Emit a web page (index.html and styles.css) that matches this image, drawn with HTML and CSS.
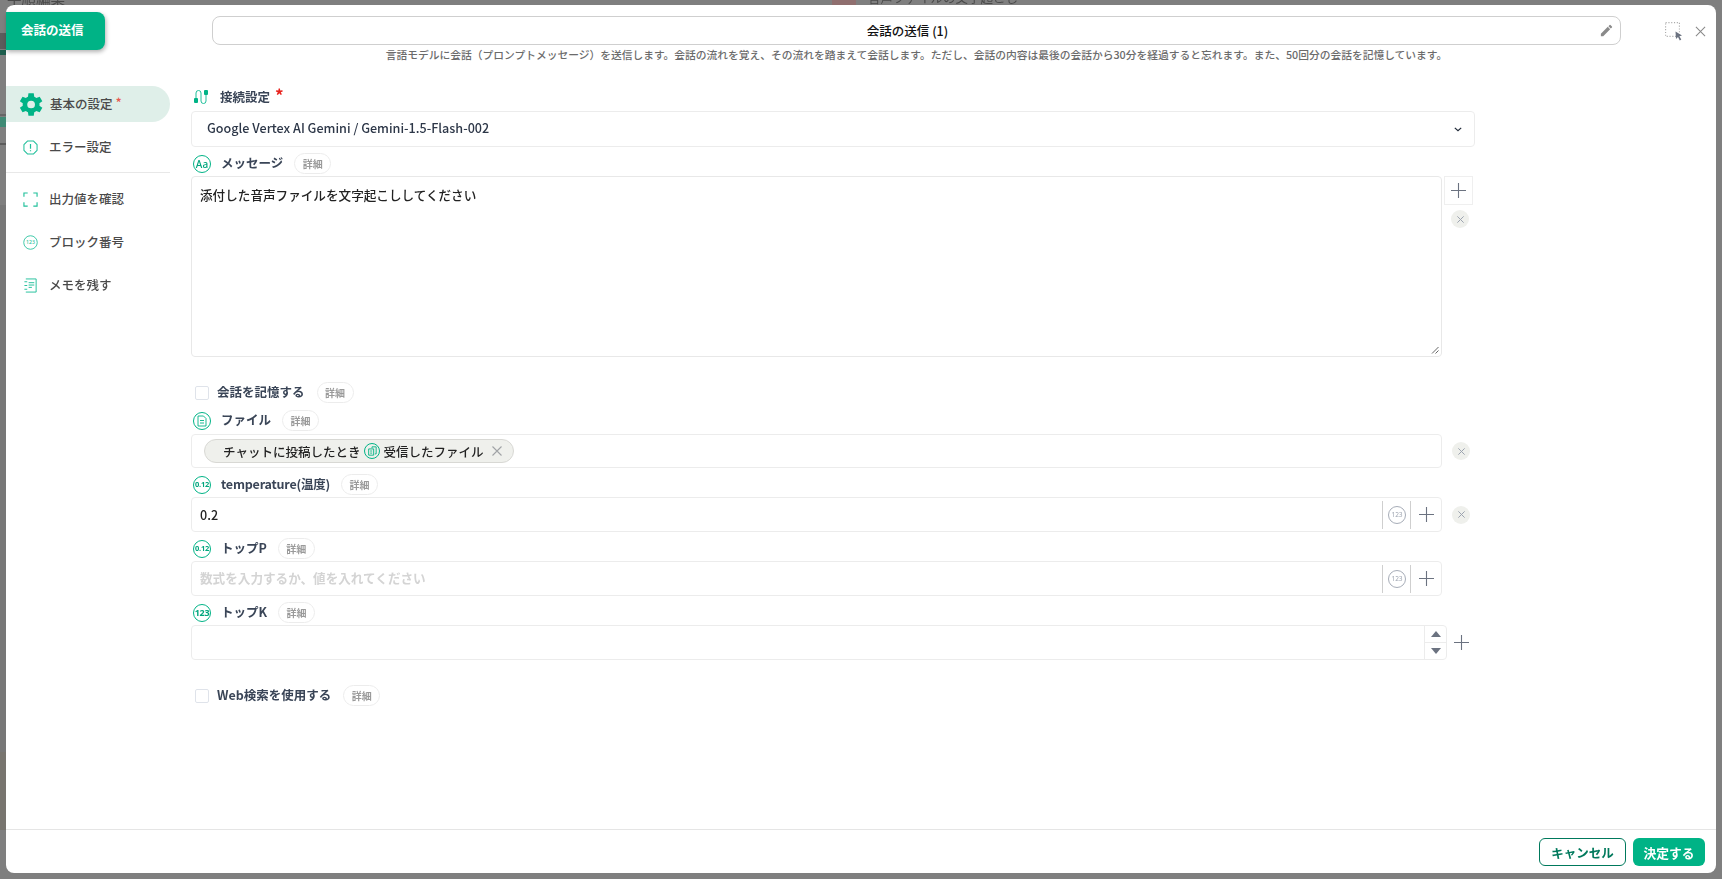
FILE: index.html
```html
<!DOCTYPE html>
<html lang="ja">
<head>
<meta charset="utf-8">
<title>会話の送信</title>
<link rel="stylesheet" href="styles.css">
</head>
<body>
<div class="backdrop">
  <span class="bg-text bg-a">手順編集</span>
  <span class="bg-mark"></span>
  <span class="bg-text bg-b">音声ファイルの文字起こし</span>
  <span class="strip s1"></span>
  <span class="strip s2"></span>
  <span class="strip s3"></span>
  <span class="strip s4"></span>
  <span class="strip s5"></span>
  <span class="strip s6"></span>
  <span class="strip s7"></span>
</div>
<div class="modal">
  <header class="head">
    <div class="tab">会話の送信</div>
    <div class="head-center">
      <div class="title">
        <span class="title-text">会話の送信 (1)</span>
        <svg class="pencil" viewBox="0 0 24 24"><path d="M3 17.25V21h3.75L17.81 9.94l-3.75-3.75L3 17.25zM20.71 7.04a1 1 0 0 0 0-1.41l-2.34-2.34a1 1 0 0 0-1.41 0l-1.83 1.83 3.75 3.75 1.83-1.83z"/></svg>
      </div>
      <p class="desc">言語モデルに会話（プロンプトメッセージ）を送信します。会話の流れを覚え、その流れを踏まえて会話します。ただし、会話の内容は最後の会話から30分を経過すると忘れます。また、50回分の会話を記憶しています。</p>
    </div>
    <div class="head-tools">
      <svg class="select-ico" viewBox="0 0 18 19"><rect x=".6" y=".6" width="13.8" height="13.8" fill="none" stroke="#aaa" stroke-width="1.1" stroke-dasharray="1.1 1.7"/><path d="M10.5 9.5l6.5 4-2.6.8 1.9 3.2-1.5.9-1.8-3.3-2 1.9z" fill="#6b7280"/></svg>
      <svg class="close-ico" viewBox="0 0 12 12"><path d="M1 1l10 10M11 1L1 11" stroke="#888" stroke-width="1.1" fill="none"/></svg>
    </div>
  </header>

  <div class="body">
    <nav class="side">
      <a class="item active">
        <svg class="ico-gear" viewBox="0 0 24 24"><path fill="#00b386" d="M19.4 13a7.6 7.6 0 0 0 0-2l2.4-1.7-2.2-3.8-2.8 1.1a7.4 7.4 0 0 0-1.7-1L14.7 2.6h-4.4l-.4 3a7.4 7.4 0 0 0-1.7 1l-2.8-1.1-2.2 3.8L5.600 11a7.600 7.600 0 0 0 0 2l-2.400 1.700 2.200 3.800 2.800-1.100a7.400 7.400 0 0 0 1.700 1l.4 3h4.400l.4-3a7.400 7.400 0 0 0 1.700-1l2.800 1.100 2.200-3.800zM12.500 15.200a3.200 3.200 0 1 1 0-6.400 3.200 3.200 0 0 1 0 6.400z"/></svg>
        <span class="item-text">基本の設定</span><span class="req-small">*</span>
      </a>
      <a class="item">
        <svg class="ico" viewBox="0 0 16 16"><path d="M5 1h6l4 4v6l-4 4H5l-4-4V5z" fill="none" stroke="#1fbf9a" stroke-width="1.1" stroke-linejoin="round"/><path d="M8 4.200v5M8 10.800v1.200" stroke="#1fbf9a" stroke-width="1.300"/></svg>
        <span class="item-text">エラー設定</span>
      </a>
      <div class="side-rule"></div>
      <a class="item">
        <svg class="ico" viewBox="0 0 16 16"><path d="M1 5V1h4M11 1h4v4M15 11v4h-4M5 15H1v-4" fill="none" stroke="#1fbf9a" stroke-width="1.200"/></svg>
        <span class="item-text">出力値を確認</span>
      </a>
      <a class="item">
        <svg class="ico" viewBox="0 0 16 16"><circle cx="8" cy="8" r="7.200" fill="none" stroke="#1fbf9a" stroke-width=".9"/><text x="8" y="10" class="ico-num-sm">123</text></svg>
        <span class="item-text">ブロック番号</span>
      </a>
      <a class="item">
        <svg class="ico" viewBox="0 0 16 16"><path d="M3 1h11v14H3M1.500 4h3M1.500 8h3M1.500 12h3" fill="none" stroke="#1fbf9a" stroke-width="1"/><path d="M6 5h6M6 7.500h6M6 10h3.500" stroke="#1fbf9a" stroke-width="1"/></svg>
        <span class="item-text">メモを残す</span>
      </a>
    </nav>

    <main class="form">
      <div class="label l-conn">
        <svg class="lab-plain" viewBox="0 0 16 16"><path d="M3 9V4a2.500 2.500 0 0 1 5 0v8a2.500 2.500 0 0 0 5 0V6" fill="none" stroke="#1fbf9a" stroke-width="1"/><rect x="1" y="9" width="4" height="5" rx="1" fill="#00b386"/><rect x="11" y="1" width="4" height="5" rx="1" fill="#00b386"/></svg>
        <span class="label-text">接続設定</span><span class="req">*</span>
      </div>
      <div class="select">
        <span class="select-text">Google Vertex AI Gemini / Gemini-1.5-Flash-002</span>
        <svg class="chev" viewBox="0 0 10 6"><path d="M1 1l4 3.600L9 1" fill="none" stroke="#1f2937" stroke-width="1.500"/></svg>
      </div>

      <div class="label l-field">
        <span class="badge"><span class="aa">Aa</span></span>
        <span class="label-text">メッセージ</span><span class="pill">詳細</span>
      </div>
      <div class="row">
        <div class="textarea">添付した音声ファイルを文字起こししてください
          <svg class="grip" viewBox="0 0 8 8"><path d="M1 7.500L7.500 1M4.500 7.500l3-3" stroke="#555" stroke-width=".9"/></svg>
        </div>
        <div class="side-tools">
          <span class="plus-box"><svg class="plus" viewBox="0 0 15 15"><path d="M7.500 0v15M0 7.500h15" stroke="#6b7280" stroke-width="1.100"/></svg></span>
          <span class="x-dot x-below"><svg viewBox="0 0 10 10"><path d="M1.500 1.500l7 7M8.500 1.500l-7 7" stroke="#9ca3af" stroke-width="1.100"/></svg></span>
        </div>
      </div>

      <label class="check c-memory"><span class="box"></span><span class="label-text">会話を記憶する</span><span class="pill">詳細</span></label>

      <div class="label l-file">
        <span class="badge"><svg viewBox="0 0 10 12"><path d="M1 1h5.500L9 3.500V11H1z M3 5.500h4M3 8h4" fill="none" stroke="#00b386" stroke-width=".9"/></svg></span>
        <span class="label-text">ファイル</span><span class="pill">詳細</span>
      </div>
      <div class="row">
        <div class="input tags">
          <span class="chip">
            <span class="chip-a">チャットに投稿したとき</span>
            <span class="badge small"><svg viewBox="0 0 12 12"><path d="M6 2.500V1h5v8.500H9.500M2 3.500h6v7.500H2zM3.800 6h2.400M3.800 8.500h2.400" fill="none" stroke="#00b386" stroke-width="1.100"/></svg></span>
            <span class="chip-b">受信したファイル</span>
            <svg class="chip-x" viewBox="0 0 10 10"><path d="M.5.5l9 9M9.500.5l-9 9" stroke="#a0a3a6" stroke-width="1.100"/></svg>
          </span>
        </div>
        <span class="x-dot x-side"><svg viewBox="0 0 10 10"><path d="M1.500 1.500l7 7M8.500 1.500l-7 7" stroke="#9ca3af" stroke-width="1.100"/></svg></span>
      </div>

      <div class="label l-field">
        <span class="badge"><span class="num">0.12</span></span>
        <span class="label-text tight">temperature(温度)</span><span class="pill">詳細</span>
      </div>
      <div class="row">
        <div class="input num-input">
          <span class="value">0.2</span>
          <span class="cell"><svg class="num-ico" viewBox="0 0 18 18"><circle cx="9" cy="9" r="8.500" fill="none" stroke="#9ca3af" stroke-width=".9"/><text x="9" y="11.300" class="ico-num">123</text></svg></span>
          <span class="cell cell-plus"><svg class="plus" viewBox="0 0 15 15"><path d="M7.500 0v15M0 7.500h15" stroke="#6b7280" stroke-width="1.100"/></svg></span>
        </div>
        <span class="x-dot x-side"><svg viewBox="0 0 10 10"><path d="M1.500 1.500l7 7M8.500 1.500l-7 7" stroke="#9ca3af" stroke-width="1.100"/></svg></span>
      </div>

      <div class="label l-field">
        <span class="badge"><span class="num">0.12</span></span>
        <span class="label-text">トップP</span><span class="pill">詳細</span>
      </div>
      <div class="row">
        <div class="input num-input">
          <span class="value placeholder">数式を入力するか、値を入れてください</span>
          <span class="cell"><svg class="num-ico" viewBox="0 0 18 18"><circle cx="9" cy="9" r="8.500" fill="none" stroke="#9ca3af" stroke-width=".9"/><text x="9" y="11.300" class="ico-num">123</text></svg></span>
          <span class="cell cell-plus"><svg class="plus" viewBox="0 0 15 15"><path d="M7.500 0v15M0 7.500h15" stroke="#6b7280" stroke-width="1.100"/></svg></span>
        </div>
      </div>

      <div class="label l-field">
        <span class="badge"><span class="num n3">123</span></span>
        <span class="label-text">トップK</span><span class="pill">詳細</span>
      </div>
      <div class="row">
        <div class="input spin-input">
          <span class="value"></span>
          <span class="spinner">
            <span class="spin-btn"><svg viewBox="0 0 10 6"><path d="M5 0l5 6H0z" fill="#6b7280"/></svg></span>
            <span class="spin-btn"><svg viewBox="0 0 10 6"><path d="M5 6L0 0h10z" fill="#6b7280"/></svg></span>
          </span>
        </div>
        <svg class="plus plus-out" viewBox="0 0 15 15"><path d="M7.500 0v15M0 7.500h15" stroke="#6b7280" stroke-width="1.100"/></svg>
      </div>

      <label class="check c-web"><span class="box"></span><span class="label-text">Web検索を使用する</span><span class="pill">詳細</span></label>
    </main>
  </div>

  <footer class="foot">
    <button class="btn ghost">キャンセル</button>
    <button class="btn solid">決定する</button>
  </footer>
</div>
</body>
</html>
```
FILE: styles.css
```css
* { box-sizing: border-box; }
html, body { margin: 0; height: 100%; }
body {
  background: #7f7f7f;
  font-family: "Noto Sans CJK JP", "Noto Sans", sans-serif;
  color: #2d3748;
  overflow: hidden;
}
.backdrop { position: fixed; inset: 0; }
.bg-text { position: absolute; color: #4a4a4a; font-size: 12.5px; line-height: 14px; white-space: nowrap; }
.bg-a { left: 7px; top: -9px; font-size: 14.5px; }
.bg-b { left: 868px; top: -9px; }
.bg-mark { position: absolute; left: 832px; top: 0; width: 24px; height: 5px; background: #8f6f6f; }
.strip { position: absolute; left: 0; width: 6px; }
.s1 { top: 33px; height: 16px; background: #5c5c5c; }
.s2 { top: 50px; height: 5px; background: #1d5e4d; }
.s3 { top: 114px; height: 2px; background: #666; }
.s4 { top: 117px; height: 10px; background: #3f8a75; }
.s5 { top: 143px; height: 2px; background: #5c5c5c; }
.s6 { top: 205px; height: 547px; background: #777; }
.s7 { top: 752px; height: 78px; background: #78756f; }

.modal {
  position: fixed;
  left: 6px; top: 5px;
  width: 1710px; height: 868px;
  background: #fff;
  border-radius: 8px;
  display: flex;
  flex-direction: column;
}
.head { display: flex; height: 72px; flex: none; }
.tab {
  width: 99px; height: 38px;
  margin-top: 7px;
  flex: none;
  background: #00b386;
  color: #fff;
  font-size: 12.5px;
  font-weight: 700;
  line-height: 36px;
  padding-left: 15px;
  border-radius: 0 8px 8px 0;
  box-shadow: 1px 2px 4px rgba(0,0,0,.3);
}
.head-center { width: 1409px; margin: 11px 0 0 107px; flex: none; }
.title {
  height: 29px;
  border: 1px solid #cfcfcf;
  border-radius: 8px;
  position: relative;
  display: flex;
  align-items: center;
  justify-content: center;
  padding-right: 18px;
}
.title-text { font-size: 12.5px; font-weight: 500; color: #111; }
.pencil { position: absolute; right: 6px; top: 6px; width: 15px; height: 15px; fill: #8a8a8a; }
.desc {
  margin: 2px 0 0;
  font-size: 10.75px;
  line-height: 16px;
  font-weight: 500;
  color: #6b6b6b;
  text-align: center;
  white-space: nowrap;
}
.head-tools { display: flex; align-items: flex-start; margin: 17px 0 0 44px; gap: 12px; }
.select-ico { width: 18px; height: 19px; }
.close-ico { width: 11px; height: 11px; margin-top: 4px; }

.body { flex: 1; display: flex; min-height: 0; }
.side { width: 164px; flex: none; padding-top: 9px; }
.item {
  display: flex;
  align-items: center;
  height: 36px;
  margin-bottom: 7px;
  padding-left: 17px;
  color: #4a4a4a;
  font-size: 12.5px;
  font-weight: 500;
}
.item-text { padding-bottom: 2px; }
.item .ico { width: 15px; height: 15px; margin-right: 11px; flex: none; }
.item.active { background: #dfefe9; border-radius: 0 18px 18px 0; padding-left: 10px; }
.ico-gear { width: 29px; height: 29px; margin-right: 5px; flex: none; }
.req-small { color: #e8584f; font-size: 13px; margin: 0 0 3px 3px; line-height: 13px; }
.side-rule { height: 1px; background: #e8e8e8; margin: 0 0 8px; }
.ico-num-sm { font-size: 5.5px; fill: #1fbf9a; text-anchor: middle; font-family: "Noto Sans", sans-serif; }

.form { flex: 1; padding-left: 21px; }
.label { display: flex; align-items: center; height: 21px; }
.label-text { font-size: 12.5px; font-weight: 700; color: #3a4557; padding-bottom: 2px; }
.tight { letter-spacing: -.2px; }
.l-conn { margin-top: 9px; margin-bottom: 3px; height: 22px; }
.l-field { margin-top: 6px; margin-bottom: 2px; }
.l-file { margin-top: 7px; margin-bottom: 3px; }
.lab-plain { width: 16px; height: 16px; margin: 0 11px 0 2px; flex: none; }
.req { color: #e8231e; font-size: 17px; font-weight: 700; margin: 0 0 5px 5px; line-height: 15px; }
.badge {
  width: 18px; height: 18px;
  border: 1.3px solid #00b386;
  border-radius: 50%;
  display: inline-flex;
  align-items: center;
  justify-content: center;
  margin: 0 10px 0 2px;
  flex: none;
}
.badge svg { width: 10px; height: 12px; }
.badge.small { width: 16px; height: 16px; margin: 0 3px 0 4px; }
.aa { font-size: 10px; font-weight: 500; color: #00a67d; line-height: 1; font-family: "Noto Sans", sans-serif; }
.num { font-size: 7.5px; font-weight: 700; color: #00a67d; letter-spacing: -.3px; line-height: 1; font-family: "Noto Sans", sans-serif; }
.n3 { font-size: 9px; }
.pill {
  margin-left: 11px;
  width: 37px; height: 21px;
  border: 1px solid #ececec;
  border-radius: 11px;
  font-size: 10px;
  font-weight: 700;
  color: #9a9a9a;
  display: inline-flex;
  align-items: center;
  justify-content: center;
}
.select {
  width: 1284px; height: 36px;
  border: 1px solid #ececec;
  border-radius: 4px;
  display: flex;
  align-items: center;
  justify-content: space-between;
  padding: 0 12px 0 15px;
  font-size: 12.6px;
  font-weight: 500;
  color: #2d3748;
}
.select-text { padding-bottom: 3px; }
.chev { width: 8px; height: 5px; }
.row { display: flex; align-items: flex-start; }
.textarea {
  width: 1251px; height: 181px;
  border: 1px solid #e8e8e8;
  border-radius: 4px;
  padding: 9px 8px;
  font-size: 12.6px;
  font-weight: 500;
  color: #222;
  line-height: 18px;
  position: relative;
}
.grip { position: absolute; right: 2px; bottom: 2px; width: 8px; height: 8px; }
.side-tools { width: 31px; padding-left: 2px; display: flex; flex-direction: column; align-items: center; }
.plus-box { width: 29px; height: 29px; border: 1px solid #efefef; display: flex; align-items: center; justify-content: center; }
.plus { width: 15px; height: 15px; flex: none; }
.x-dot { width: 18px; height: 18px; border-radius: 50%; background: #eff0ec; display: flex; align-items: center; justify-content: center; flex: none; }
.x-dot svg { width: 9px; height: 9px; }
.x-below { margin-top: 5px; margin-left: 3px; }
.x-side { align-self: center; margin-left: 10px; }

.check { display: flex; align-items: center; height: 21px; padding-left: 4px; }
.box { width: 14px; height: 14px; border: 1px solid #dfe3ea; border-radius: 2px; margin-right: 8px; flex: none; }
.c-memory { margin-top: 25px; }
.c-web { margin-top: 25px; }
.check .pill { margin-left: 12px; }

.input {
  width: 1251px; height: 35px;
  border: 1px solid #ececec;
  border-radius: 4px;
  display: flex;
  align-items: center;
  font-size: 12.6px;
}
.tags { height: 34px; padding-left: 12px; }
.chip {
  height: 24px;
  width: 310px;
  border: 1px solid #d8d8d4;
  border-radius: 12px;
  background: #eff0ec;
  display: flex;
  align-items: center;
  padding-left: 18px;
  font-size: 12.5px;
  font-weight: 500;
  color: #222;
  white-space: nowrap;
}
.chip-x { width: 10px; height: 10px; margin-left: 9px; flex: none; }
.value { flex: 1; padding-left: 8px; color: #222; font-weight: 500; }
.placeholder { color: #d4d4d4; font-weight: 700; padding-bottom: 2px; }
.cell { height: 28px; width: 28px; border-left: 1px solid #cfcfcf; display: flex; align-items: center; justify-content: center; flex: none; }
.cell-plus { width: 31px; }
.num-ico { width: 18px; height: 18px; }
.ico-num { font-size: 6.5px; fill: #9ca3af; text-anchor: middle; font-family: "Noto Sans", sans-serif; }
.spin-input { width: 1256px; }
.spinner { width: 22px; height: 100%; border-left: 1px solid #ececec; display: flex; flex-direction: column; flex: none; }
.spin-btn { flex: 1; display: flex; align-items: center; justify-content: center; }
.spin-btn + .spin-btn { border-top: 1px solid #ececec; }
.spin-btn svg { width: 10px; height: 6px; }
.plus-out { margin: 10px 0 0 7px; }

.foot {
  height: 44px;
  flex: none;
  border-top: 1px solid #e5e5e5;
  display: flex;
  justify-content: flex-end;
  align-items: flex-start;
  padding: 8px 11px 0 0;
  gap: 7px;
}
.btn {
  height: 28px;
  border-radius: 6px;
  font-family: inherit;
  font-size: 12.5px;
  font-weight: 700;
  padding: 0;
}
.ghost { width: 87px; background: #fff; border: 1px solid #00795c; color: #00795c; }
.solid { width: 72px; background: #00b386; border: 0; color: #fff; font-size: 12.75px; }
```
